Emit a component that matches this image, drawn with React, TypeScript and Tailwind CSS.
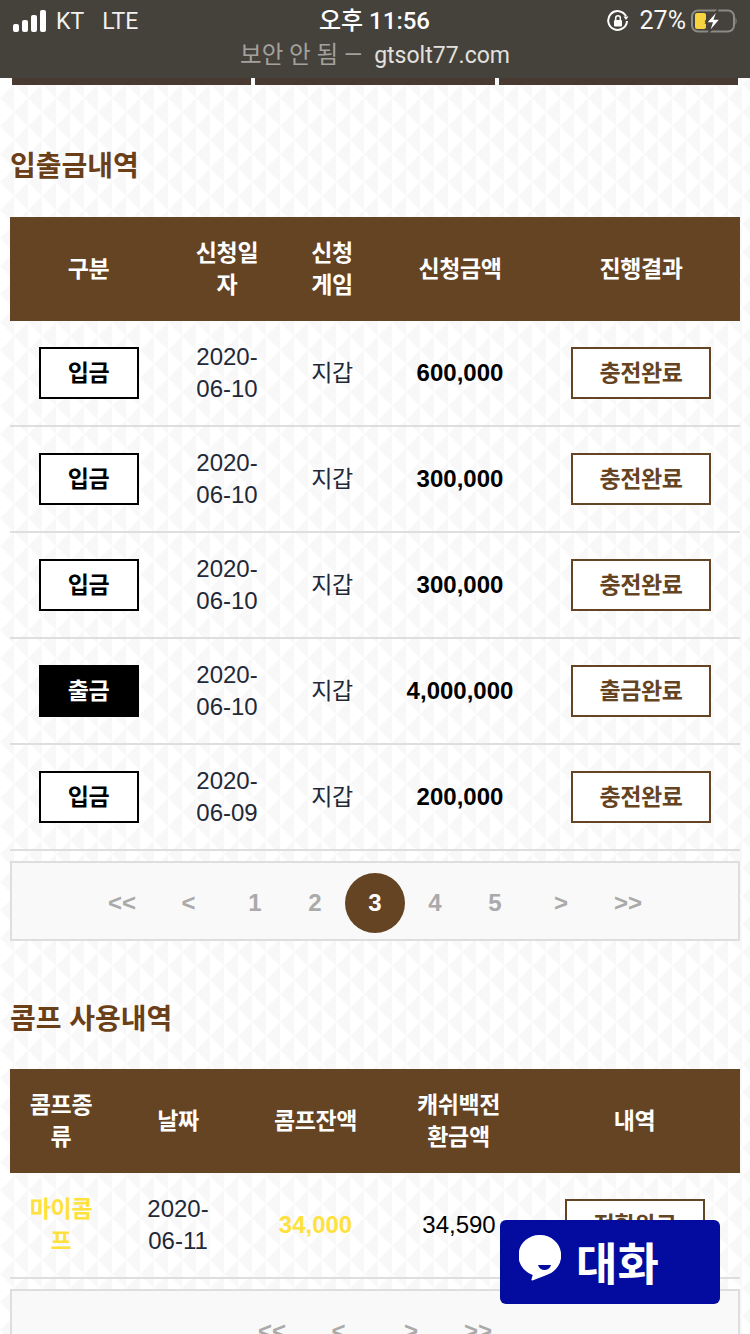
const font = "font-['Liberation_Sans','Noto_Sans_CJK_KR',sans-serif]"

const depositRows = [
  { type: '입금', date: '2020-06-10', amount: '600,000', result: '충전완료' },
  { type: '입금', date: '2020-06-10', amount: '300,000', result: '충전완료' },
  { type: '입금', date: '2020-06-10', amount: '300,000', result: '충전완료' },
  { type: '출금', date: '2020-06-10', amount: '4,000,000', result: '출금완료' },
  { type: '입금', date: '2020-06-09', amount: '200,000', result: '충전완료' },
]

function Pager({ pages, active }: { pages: number[]; active?: number }) {
  return (
    <div className="mt-[10px] h-[80px] pt-[4px] border-2 border-[#dedede] bg-[#f9f9f9] flex items-center justify-center text-[24px] leading-[32px] font-bold text-[#aaaaaa]">
      <span className="w-[74px] text-center">&lt;&lt;</span>
      <span className="w-[60px] text-center mr-[6px] pr-[1px]">&lt;</span>
      {pages.map((p) => (
        <span
          key={p}
          className={
            p === active
              ? 'w-[60px] h-[60px] rounded-full bg-[#654424] text-white flex items-center justify-center'
              : 'w-[60px] text-center'
          }
        >
          {p}
        </span>
      ))}
      <span className="w-[60px] text-center ml-[6px]">&gt;</span>
      <span className="w-[74px] text-center">&gt;&gt;</span>
    </div>
  )
}

function Battery() {
  return (
    <svg width="46" height="24" viewBox="0 0 46 24" fill="none">
      <rect x="1" y="1.500" width="42" height="21" rx="6" stroke="#8b8a86" strokeWidth="2" />
      <path d="M44.500 8.500c1.400.6 1.400 6.400 0 7z" fill="#8b8a86" />
      <path d="M4 6c0-1.200.8-2 2-2h7c1.200 0 2 .8 2 2v4.500l-1.300 2 1.300 1V18c0 1.200-.8 2-2 2H6c-1.200 0-2-.8-2-2z" fill="#f7d33f" />
      <path d="M27 .5 15 14h6L17.500 24 29.500 10h-6z" fill="#fff" stroke="#45413b" strokeWidth="1.500" />
    </svg>
  )
}

function StatusBar() {
  return (
    <div className="absolute top-0 inset-x-0 h-[78px] bg-[#45413b] text-white">
      <div className="h-[41px] grid grid-cols-3 items-center px-[13px]">
        <div className="flex items-center text-[23px] font-['Roboto',sans-serif] text-[#f2f1ef]">
          <svg width="34" height="22" viewBox="0 0 34 22" fill="#fff" className="mr-[9px]">
            <rect x="0" y="14" width="6" height="8" rx="2" />
            <rect x="9" y="10" width="6" height="12" rx="2" />
            <rect x="18" y="5" width="6" height="17" rx="2" />
            <rect x="27" y="0" width="6" height="22" rx="2" />
          </svg>
          <span className="pt-[3px]">KT</span>
          <span className="ml-[18px] pt-[3px]">LTE</span>
        </div>
        <div className="text-center text-[24px] font-medium font-['Roboto','Noto_Sans_CJK_KR',sans-serif] -ml-[1px]">오후 11:56</div>
        <div className="flex items-center justify-end">
          <svg width="22" height="22" viewBox="0 0 22 22" fill="none" className="mr-[11px]">
            <path d="M19 6.200A9.400 9.400 0 1 0 20 11" stroke="#fff" strokeWidth="2" />
            <path d="M16.500 6.500h5l-2.500 3.500z" fill="#fff" />
            <rect x="7" y="10" width="8" height="6.500" rx="1" fill="#fff" />
            <path d="M8.700 10V8a2.300 2.300 0 0 1 4.600 0v2" stroke="#fff" strokeWidth="1.500" />
          </svg>
          <span className="text-[25px] font-['Roboto',sans-serif] text-[#f7f6f4] mr-[5px]">27%</span>
          <Battery />
        </div>
      </div>
      <div className="text-center pt-[1px] text-[23px] leading-[26px] font-['Roboto','Noto_Sans_CJK_KR',sans-serif] text-[#e2e1de]">
        <span className="text-[#a3a19d] text-[23.5px] mr-[6px]">보안 안 됨 — </span>gtsolt77.com
      </div>
    </div>
  )
}

function ChatButton() {
  return (
    <div className="absolute left-[500px] top-[1220px] w-[220px] h-[84px] rounded-[6px] bg-[#030c9e] flex items-center pl-[19px] text-white">
      <svg width="42" height="46" viewBox="0 0 42 46" className="mb-[8px]">
        <path d="M21 0a21 20.500 0 0 1 6 40.200L13.500 45.500c-.9.200-1.300-.6-1-1.300l1.200-4.300A21 20.500 0 0 1 21 0z" fill="#fff" />
        <path d="M19 30h13c-1 3.500-3.500 5-6.500 5s-5.500-1.500-6.500-5z" fill="#030c9e" />
      </svg>
      <span className="ml-[15px] text-[45px] font-bold font-['Noto_Sans_CJK_KR',sans-serif]">대화</span>
    </div>
  )
}

export default function App() {
  return (
    <div className={`relative w-[750px] h-[1334px] overflow-hidden bg-white bg-[url('data:image/svg+xml,%3Csvg%20xmlns=%22http://www.w3.org/2000/svg%22%20width=%2228%22%20height=%2228%22%3E%3Cpath%20fill=%22%23f8f8f8%22%20d=%22M14%200L0%2014L14%2028ZM14%200H28V14ZM28%2014V28H14Z%22/%3E%3C/svg%3E')] ${font}`}>
      {/* tabs scrolled away under the browser bar */}
      <div className="h-[85px] px-[12px] flex gap-[4px]">
        <div className="flex-1 bg-[#483a31]" />
        <div className="flex-1 bg-[#483a31]" />
        <div className="flex-1 bg-[#483a31]" />
      </div>

      <div className="px-[10px]">
        <h2 className="h-[132px] pt-[32px] flex items-center text-[28px] font-bold text-[#6b3f17]">입출금내역</h2>

        <div className="grid grid-cols-[157px_120px_90px_166px_197px] h-[104px] items-center text-center bg-[#654424] text-white text-[23px] tracking-[-0.4px] leading-[32px] font-bold">
          <div>구분</div>
          <div className="px-5">신청일자</div>
          <div className="px-5">신청게임</div>
          <div>신청금액</div>
          <div className="pr-[1px]">진행결과</div>
        </div>
        {depositRows.map((row, i) => (
          <div key={i} className="grid grid-cols-[157px_120px_90px_166px_197px] h-[106px] items-center text-center border-b-2 border-[#dedede] text-[24px] leading-[32px] text-[#1f2937]">
            <div className="flex justify-center">
              <span
                className={
                  row.type === '출금'
                    ? 'w-[100px] h-[52px] flex items-center justify-center border-2 border-black bg-black text-white font-bold text-[23px] tracking-[-0.4px]'
                    : 'w-[100px] h-[52px] flex items-center justify-center border-2 border-black bg-white text-black font-bold text-[23px] tracking-[-0.4px]'
                }
              >
                {row.type}
              </span>
            </div>
            <div className="px-5">{row.date}</div>
            <div className="text-[23px] tracking-[-0.4px]">지갑</div>
            <div className="font-bold text-black">{row.amount}</div>
            <div className="flex justify-center pr-[1px]">
              <span className="w-[140px] h-[52px] flex items-center justify-center border-2 border-[#654424] bg-white text-[#654424] font-bold text-[23px] tracking-[-0.4px]">{row.result}</span>
            </div>
          </div>
        ))}
        <Pager pages={[1, 2, 3, 4, 5]} active={3} />

        <h2 className="h-[128px] pt-[30px] flex items-center text-[28px] font-bold text-[#6b3f17]">콤프 사용내역</h2>

        <div className="grid grid-cols-[102px_132px_143px_144px_209px] h-[104px] items-center text-center bg-[#654424] text-white text-[23px] tracking-[-0.4px] leading-[32px] font-bold">
          <div className="px-4">콤프종류</div>
          <div>날짜</div>
          <div>콤프잔액</div>
          <div className="px-5 pr-[21px]">캐쉬백전 환금액</div>
          <div className="pr-[2px]">내역</div>
        </div>
        <div className="grid grid-cols-[102px_132px_143px_144px_209px] h-[106px] items-center text-center border-b-2 border-[#dedede] text-[24px] leading-[32px] text-[#1f2937]">
          <div className="px-4 font-bold text-[#ffe13e] text-[23px] tracking-[-0.4px]">마이콤프</div>
          <div className="px-8">2020-06-11</div>
          <div className="font-bold text-[#ffe13e]">34,000</div>
          <div className="text-black">34,590</div>
          <div className="flex justify-center pr-[1px]">
            <span className="w-[140px] h-[52px] flex items-center justify-center border-2 border-[#654424] bg-white text-[#654424] font-bold text-[23px] tracking-[-0.4px]">전환완료</span>
          </div>
        </div>
        <Pager pages={[]} />
      </div>

      <StatusBar />
      <ChatButton />
    </div>
  )
}
